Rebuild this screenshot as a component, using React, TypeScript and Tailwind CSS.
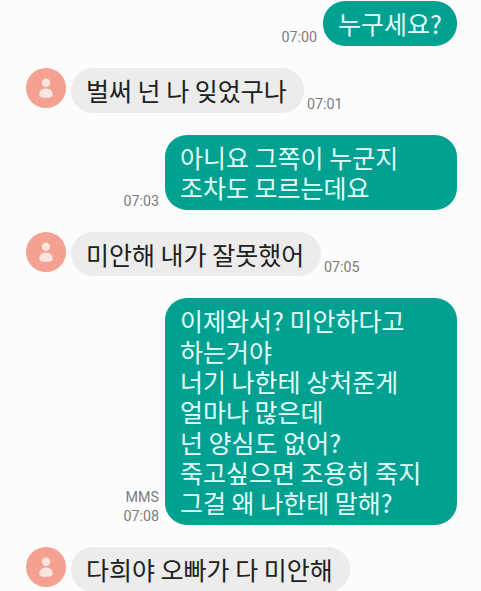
import React from 'react';

type Message = {
  id: number;
  mine: boolean;
  lines: string[];
  time?: string;
  type?: string;
  width: string;
  spacing: string;
};

const messages: Message[] = [
  { id: 1, mine: true, lines: ['누구세요?'], time: '07:00', width: 'w-[134px]', spacing: 'mt-[1px]' },
  { id: 2, mine: false, lines: ['벌써 넌 나 잊었구나'], time: '07:01', width: 'w-[233px]', spacing: 'mt-[22px]' },
  { id: 3, mine: true, lines: ['아니요 그쪽이 누군지', '조차도 모르는데요'], time: '07:03', width: 'w-[292px]', spacing: 'mt-[22px]' },
  { id: 4, mine: false, lines: ['미안해 내가 잘못했어'], time: '07:05', width: 'w-[250px]', spacing: 'mt-[22px]' },
  {
    id: 5,
    mine: true,
    lines: [
      '이제와서? 미안하다고',
      '하는거야',
      '너기 나한테 상처준게',
      '얼마나 많은데',
      '넌 양심도 없어?',
      '죽고싶으면 조용히 죽지',
      '그걸 왜 나한테 말해?',
    ],
    time: '07:08',
    type: 'MMS',
    width: 'w-[292px]',
    spacing: 'mt-[22px]',
  },
  { id: 6, mine: false, lines: ['다희야 오빠가 다 미안해'], width: 'w-[279px]', spacing: 'mt-[22px]' },
];

const Avatar: React.FC = () => (
  <svg viewBox="0 0 40 40" className="w-10 h-10 mr-[5px] shrink-0 self-start">
    <circle cx="20" cy="20" r="20" fill="#f4a192" />
    <circle cx="20" cy="14.8" r="4.2" fill="#fde5df" />
    <path d="M13.3 26.7c0-3.8 2.5-6.3 6.7-6.3s6.7 2.5 6.7 6.3c0 2.1-2.2 3.1-6.7 3.1s-6.7-1-6.7-3.1Z" fill="#fde5df" />
  </svg>
);

const Stamp: React.FC<{ message: Message }> = ({ message }) => (
  <div
    className={`font-[Roboto,sans-serif] text-[14.3px] leading-[19px] text-[#7c7c7c] text-right ${
      message.mine ? 'mr-[6px] -mb-px' : 'ml-[3px] -mb-px'
    }`}
  >
    {message.type && <div>{message.type}</div>}
    <div>{message.time}</div>
  </div>
);

const Bubble: React.FC<{ message: Message }> = ({ message }) => (
  <div
    className={`${message.width} shrink-0 rounded-[22px] pl-[15px] pt-[7px] pb-[7.5px] text-[25px] leading-[30.3px] whitespace-nowrap ${
      message.mine ? 'bg-[#00a190] text-[#e4fffb]' : 'bg-[#ececec] text-[#202020]'
    }`}
  >
    {message.lines.map((line) => (
      <p key={line}>{line}</p>
    ))}
  </div>
);

export default function App() {
  return (
    <div className="w-[481px] h-[591px] overflow-hidden bg-[#fcfcfc] font-['Noto_Sans_CJK_KR',sans-serif]">
      <div className="flex flex-col pl-[26px] pr-6">
        {messages.map((message) => (
          <div
            key={message.id}
            className={`flex items-end ${message.spacing} ${message.mine ? 'justify-end' : 'justify-start'}`}
          >
            {message.mine ? <Stamp message={message} /> : <Avatar />}
            <Bubble message={message} />
            {!message.mine && message.time && <Stamp message={message} />}
          </div>
        ))}
      </div>
    </div>
  );
}
